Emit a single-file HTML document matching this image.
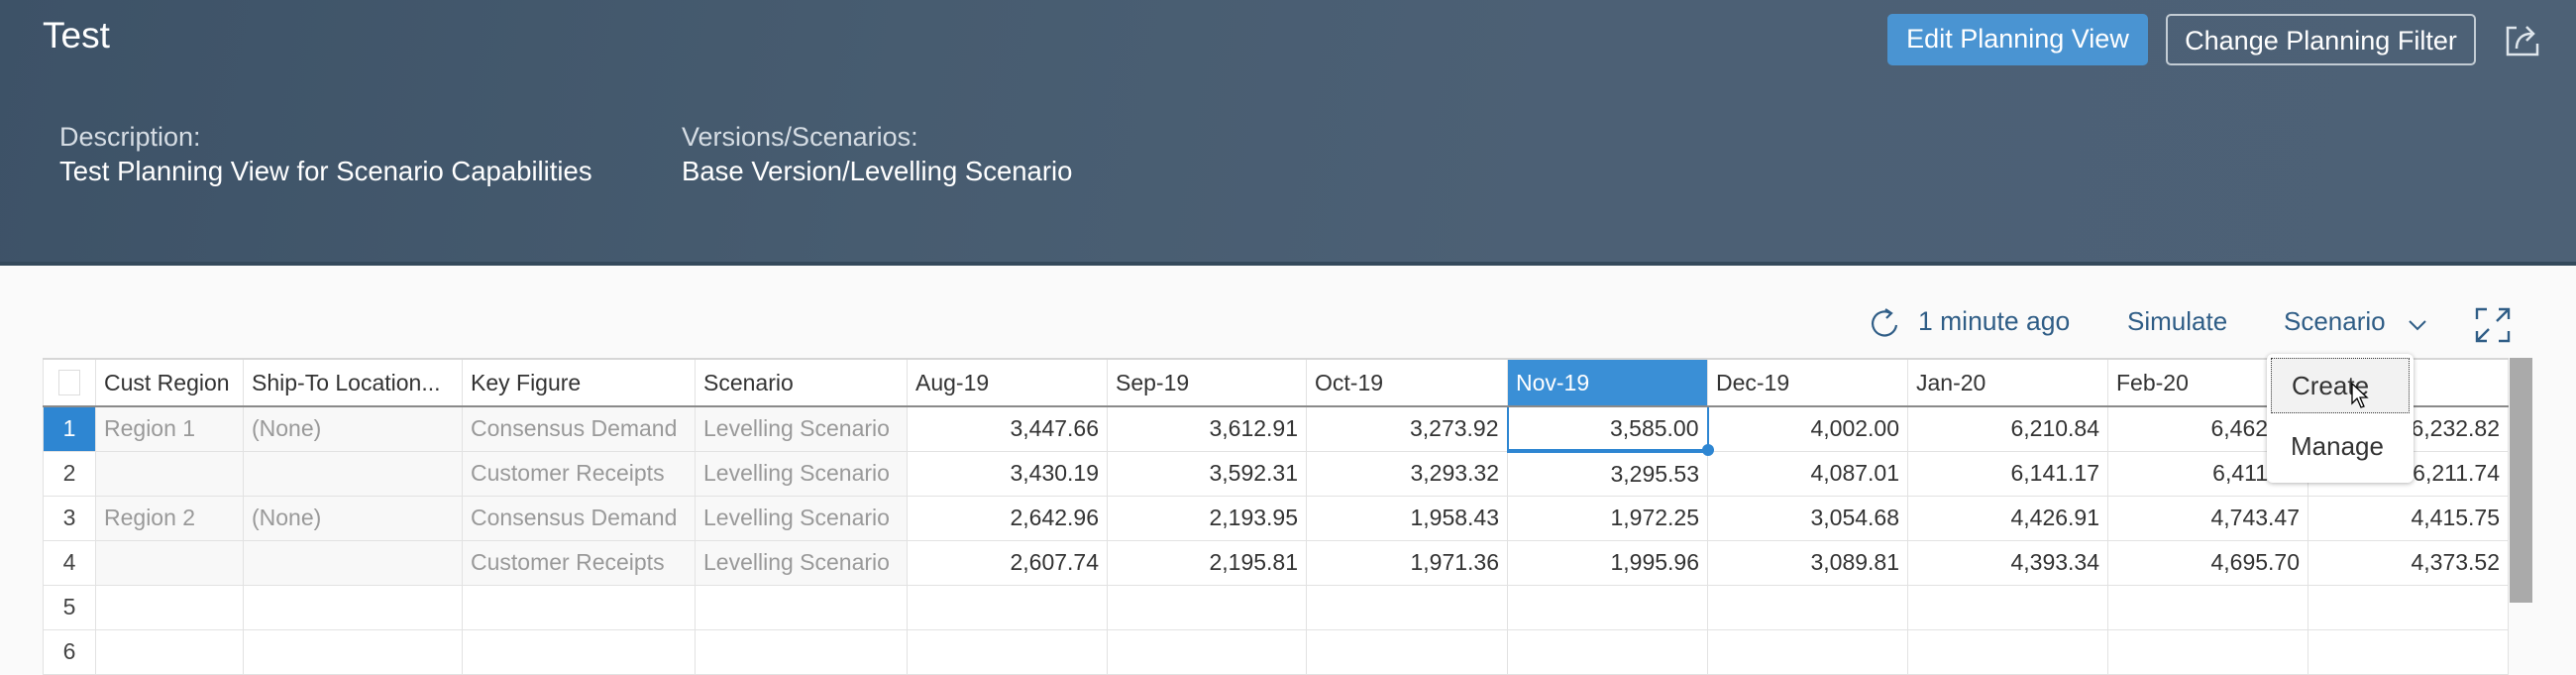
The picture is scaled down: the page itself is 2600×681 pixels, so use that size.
<!DOCTYPE html>
<html><head><meta charset="utf-8"><style>
*{margin:0;padding:0;box-sizing:border-box}
body{width:2600px;height:677px;overflow:hidden;background:#fafafa;font-family:"Liberation Sans",Arial,sans-serif;position:relative}
.hdr{position:absolute;left:0;top:0;width:2600px;height:265px;background:linear-gradient(100deg,#3d5267 0%,#475c70 35%,#4c6075 60%,#4d6176 100%)}
.strip{position:absolute;left:0;top:264px;width:2600px;height:4px;background:#34495b}
.a{position:absolute;white-space:nowrap}
.btn{position:absolute;top:14px;height:52px;border-radius:5px;font-size:27px;line-height:50px;text-align:center;color:#fff}
.tb{position:absolute;top:306px;font-size:26px;color:#2f5d86;line-height:36px}
table{position:absolute;left:43px;top:361px;border-collapse:collapse;font-size:23px;table-layout:fixed;background:#fff}
td{border:1px solid #e2e2e2;height:45px;padding:0 8px;white-space:nowrap;overflow:hidden;color:#333}
tr.h td{height:48px;border-top:2px solid #d6d6d6;border-bottom:2px solid #8a8a8a;color:#333}
td.n{text-align:center;color:#444;padding:0}
td.d{color:#999;background:#f8f8f8}
td.r{text-align:right}
</style></head><body>
<div class="hdr"></div><div class="strip"></div>
<div class="a" style="left:43px;top:15px;font-size:37px;color:#fff">Test</div>
<div class="a" style="left:60px;top:123px;font-size:27px;color:#d6dde4">Description:</div>
<div class="a" style="left:60px;top:157px;font-size:27.5px;color:#fff">Test Planning View for Scenario Capabilities</div>
<div class="a" style="left:688px;top:123px;font-size:27px;color:#d6dde4">Versions/Scenarios:</div>
<div class="a" style="left:688px;top:157px;font-size:27.5px;color:#fff">Base Version/Levelling Scenario</div>
<div class="btn" style="left:1905px;width:263px;background:#4a94d2">Edit Planning View</div>
<div class="btn" style="left:2186px;width:313px;border:2px solid #c3ccd4">Change Planning Filter</div>
<svg class="a" style="left:2528px;top:22px" width="38" height="36" viewBox="0 0 38 36" fill="none" stroke="#dfe6ec" stroke-width="2.5"><path d="M12 6H3v27h30v-11"/><path d="M12 27c0-10 6-15 15-15"/><path d="M22 5l7 7-7 7"/></svg>
<svg class="a" style="left:1888px;top:310px" width="30" height="32" viewBox="0 0 30 32" fill="none" stroke="#2f5d86" stroke-width="2.2"><path d="M20 6A12 12 0 1 0 26 18"/><path d="M15 2l6 4-5 5"/></svg>
<div class="tb" style="left:1936px;font-size:26.5px">1 minute ago</div>
<div class="tb" style="left:2147px">Simulate</div>
<div class="tb" style="left:2305px">Scenario</div>
<svg class="a" style="left:2430px;top:322px" width="20" height="12" viewBox="0 0 20 12" fill="none" stroke="#2f5d86" stroke-width="2"><path d="M2 2l8 8 8-8"/></svg>
<svg class="a" style="left:2498px;top:310px" width="36" height="36" viewBox="0 0 36 36" fill="none" stroke="#2f5d86" stroke-width="2.4"><path d="M2 12V2h10M34 24v10H24M24 2h10v10M34 2L22 14M2 24v10h10M2 34l12-12"/></svg>
<table>
<colgroup><col style="width:53px"><col style="width:149px"><col style="width:221px"><col style="width:235px"><col style="width:214px"><col style="width:202px"><col style="width:201px"><col style="width:203px"><col style="width:202px"><col style="width:202px"><col style="width:202px"><col style="width:202px"><col style="width:202px"></colgroup>
<tr class="h"><td class="n"><div style="width:22px;height:26px;border:1px solid #ddd;margin:auto"></div></td><td>Cust Region</td><td>Ship-To Location...</td><td>Key Figure</td><td>Scenario</td><td>Aug-19</td><td>Sep-19</td><td>Oct-19</td><td style="background:#3a8fd6;color:#fff">Nov-19</td><td>Dec-19</td><td>Jan-20</td><td>Feb-20</td><td></td></tr>
<tr><td class="n" style="background:#2e86d2;color:#fff">1</td><td class="d">Region 1</td><td class="d">(None)</td><td class="d">Consensus Demand</td><td class="d">Levelling Scenario</td><td class="r">3,447.66</td><td class="r">3,612.91</td><td class="r">3,273.92</td><td class="r" style="border:2px solid #2e86d2;border-bottom:4px solid #2e86d2">3,585.00</td><td class="r">4,002.00</td><td class="r">6,210.84</td><td class="r">6,462.00</td><td class="r">6,232.82</td></tr>
<tr><td class="n">2</td><td class="d"></td><td class="d"></td><td class="d">Customer Receipts</td><td class="d">Levelling Scenario</td><td class="r">3,430.19</td><td class="r">3,592.31</td><td class="r">3,293.32</td><td class="r">3,295.53</td><td class="r">4,087.01</td><td class="r">6,141.17</td><td class="r">6,411.00</td><td class="r">6,211.74</td></tr>
<tr><td class="n">3</td><td class="d">Region 2</td><td class="d">(None)</td><td class="d">Consensus Demand</td><td class="d">Levelling Scenario</td><td class="r">2,642.96</td><td class="r">2,193.95</td><td class="r">1,958.43</td><td class="r">1,972.25</td><td class="r">3,054.68</td><td class="r">4,426.91</td><td class="r">4,743.47</td><td class="r">4,415.75</td></tr>
<tr><td class="n">4</td><td class="d"></td><td class="d"></td><td class="d">Customer Receipts</td><td class="d">Levelling Scenario</td><td class="r">2,607.74</td><td class="r">2,195.81</td><td class="r">1,971.36</td><td class="r">1,995.96</td><td class="r">3,089.81</td><td class="r">4,393.34</td><td class="r">4,695.70</td><td class="r">4,373.52</td></tr>
<tr><td class="n">5</td><td></td><td></td><td></td><td></td><td></td><td></td><td></td><td></td><td></td><td></td><td></td><td></td></tr>
<tr><td class="n">6</td><td></td><td></td><td></td><td></td><td></td><td></td><td></td><td></td><td></td><td></td><td></td><td></td></tr>
</table>
<div class="a" style="left:1718px;top:448px;width:12px;height:12px;border-radius:50%;background:#2e86d2"></div>
<div class="a" style="left:2533px;top:361px;width:23px;height:247px;background:#aaa"></div>
<div class="a" style="left:2288px;top:357px;width:148px;height:130px;background:#fff;border-radius:6px;box-shadow:0 1px 5px rgba(0,0,0,.3)">
<div style="position:absolute;left:4px;top:4px;width:140px;height:56px;background:#f2f2f2;border:1px dotted #333;font-size:26px;line-height:54px;padding-left:20px;color:#333">Create</div>
<div style="position:absolute;left:24px;top:78px;font-size:26px;color:#333">Manage</div>
</div>
<svg class="a" style="left:2372px;top:385px" width="20" height="28" viewBox="0 0 20 28"><path d="M2 2v20l5-5 4 9 3-1-4-9h7z" fill="#fff" stroke="#000" stroke-width="1.3"/></svg>
</body></html>
